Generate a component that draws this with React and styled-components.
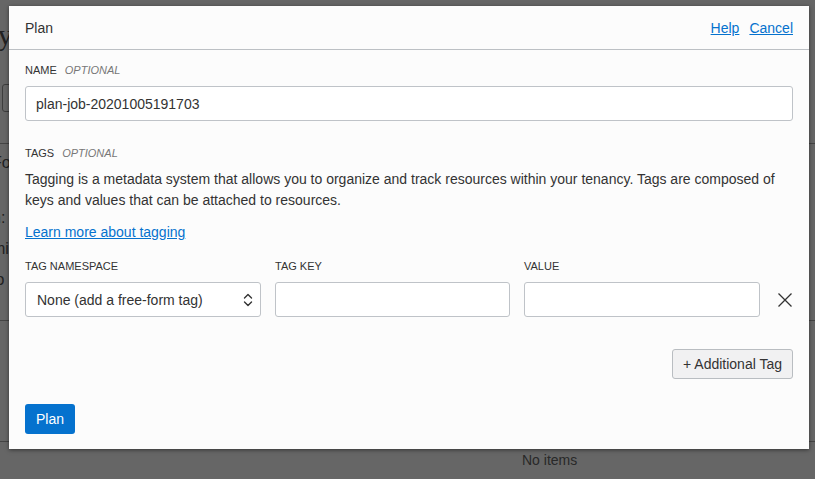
import React from 'react';
import styled, { createGlobalStyle } from 'styled-components';

const GlobalStyle = createGlobalStyle`
  html, body {
    margin: 0;
    padding: 0;
    height: 100%;
    overflow: hidden;
    background: #ffffff;
    font-family: "Liberation Sans", Arial, sans-serif;
  }
  #root {
    height: 100%;
  }
`;

const Page = styled.div`
  position: relative;
  height: 479px;
  background: #ffffff;
  color: #555;
  font-family: "Liberation Serif", serif;
`;

const PageTitle = styled.h1`
  margin: 0;
  padding: 18px 0 0 0;
  font-size: 30px;
  font-weight: 400;
  color: #555;
  white-space: nowrap;
  transform: translateX(-104px);
`;

const PageToolbar = styled.div`
  margin: 32px 0 0 2px;
  width: 60px;
  height: 26px;
  border: 1px solid #999;
  border-radius: 3px;
`;

const PageRule = styled.div`
  margin-top: ${(p) => p.$gap}px;
  border-top: 1px solid #aaa;
`;

const PageLine = styled.div`
  margin-top: ${(p) => p.$gap}px;
  font-size: 16px;
  line-height: 18px;
  transform: translateX(-8px);
  font-family: "Liberation Sans", Arial, sans-serif;
`;

const EmptyState = styled.div`
  position: absolute;
  left: 522px;
  top: 452px;
  font-size: 14px;
  font-family: "Liberation Sans", Arial, sans-serif;
  color: #666;
`;

const Backdrop = styled.div`
  position: absolute;
  inset: 0;
  background: rgba(0, 0, 0, 0.6);
`;

const Dialog = styled.div`
  position: absolute;
  left: 9px;
  top: 6px;
  width: 800px;
  height: 443px;
  background: #fcfcfc;
  box-shadow: 0 1px 4px rgba(0, 0, 0, 0.5);
  display: flex;
  flex-direction: column;
  font-family: "Liberation Sans", Arial, sans-serif;
  color: #333;
`;

const Header = styled.div`
  height: 44px;
  box-sizing: border-box;
  border-bottom: 1px solid #bcc0c4;
  display: flex;
  align-items: center;
  justify-content: space-between;
  padding: 0 16px;
  font-size: 14px;
`;

const Title = styled.div`
  color: #333;
`;

const HeaderLinks = styled.div`
  display: flex;
  gap: 10px;
  padding-top: 1px;
`;

const Link = styled.a`
  color: #0572ce;
  text-decoration: underline;
  font-size: 14px;
  cursor: pointer;
`;

const Body = styled.div`
  padding: 14px 16px 0 16px;
  display: flex;
  flex-direction: column;
`;

const Label = styled.div`
  font-size: 11px;
  text-transform: uppercase;
  color: #333;
  line-height: 13px;
  margin-bottom: ${(p) => p.$mb ?? 9}px;
`;

const Optional = styled.span`
  font-style: italic;
  color: #777;
  margin-left: 8px;
`;

const TextInput = styled.div`
  box-sizing: border-box;
  height: 35px;
  background: #fff;
  border: 1px solid #bfc3c8;
  border-radius: 3px;
  padding: 0 10px;
  display: flex;
  align-items: center;
  font-size: 14px;
  color: #333;
`;

const Section = styled.div`
  margin-top: ${(p) => p.$mt}px;
`;

const Paragraph = styled.p`
  margin: 0;
  font-size: 14px;
  line-height: 21px;
  color: #333;
`;

const LinkLine = styled(Paragraph)`
  margin-top: 11px;
`;

const TagRow = styled.div`
  display: grid;
  grid-template-columns: 236px 235px 236px 22px;
  column-gap: 14px;
  align-items: end;
`;

const Field = styled.div`
  display: flex;
  flex-direction: column;
`;

const SelectBox = styled(TextInput)`
  justify-content: space-between;
  padding: 0 7px 0 11px;
`;

const RemoveButton = styled.button`
  height: 35px;
  border: none;
  background: none;
  padding: 0;
  display: flex;
  align-items: center;
  justify-content: center;
  color: #333;
  cursor: pointer;
`;

const ActionRow = styled.div`
  display: flex;
  justify-content: flex-end;
  margin-top: 32px;
`;

const SecondaryButton = styled.button`
  height: 30px;
  box-sizing: border-box;
  padding: 0 10px;
  font-family: inherit;
  font-size: 14px;
  color: #333;
  background: #f1f1f2;
  border: 1px solid #b9bdc1;
  border-radius: 3px;
`;

const Footer = styled.div`
  padding: 25px 16px 0 16px;
`;

const PrimaryButton = styled.button`
  height: 30px;
  padding: 0 11px;
  font-family: inherit;
  font-size: 14px;
  color: #fff;
  background: #0572ce;
  border: none;
  border-radius: 3px;
`;

function Chevrons() {
  return (
    <svg width="10" height="14" viewBox="0 0 10 14" fill="none" stroke="#333" strokeWidth="1.4" strokeLinecap="round" strokeLinejoin="round">
      <path d="M1.5 5 L5 1.5 L8.5 5" />
      <path d="M1.5 9 L5 12.5 L8.5 9" />
    </svg>
  );
}

function CloseIcon() {
  return (
    <svg width="16" height="16" viewBox="0 0 16 16" fill="none" stroke="#333" strokeWidth="1.3">
      <path d="M1.5 1.5 L14.5 14.5 M14.5 1.5 L1.5 14.5" />
    </svg>
  );
}

export default function App() {
  return (
    <>
      <GlobalStyle />
      <Page>
        <PageTitle>Company</PageTitle>
        <PageToolbar />
        <PageRule $gap={31} />
        <PageLine $gap={10}>Form</PageLine>
        <PageLine $gap={37}>n:</PageLine>
        <PageLine $gap={13}>mi</PageLine>
        <PageLine $gap={13}>lo</PageLine>
        <PageRule $gap={31} />
        <PageRule $gap={120} />
        <EmptyState>No items</EmptyState>
        <Backdrop />
        <Dialog>
          <Header>
            <Title>Plan</Title>
            <HeaderLinks>
              <Link>Help</Link>
              <Link>Cancel</Link>
            </HeaderLinks>
          </Header>
          <Body>
            <Label>
              Name<Optional>Optional</Optional>
            </Label>
            <TextInput>plan-job-20201005191703</TextInput>
            <Section $mt={26}>
              <Label>
                Tags<Optional>Optional</Optional>
              </Label>
              <Paragraph>
                Tagging is a metadata system that allows you to organize and track resources within your tenancy. Tags are composed of keys and values that can be attached to resources.
              </Paragraph>
              <LinkLine>
                <Link>Learn more about tagging</Link>
              </LinkLine>
            </Section>
            <Section $mt={17}>
              <TagRow>
                <Field>
                  <Label>Tag Namespace</Label>
                  <SelectBox>
                    None (add a free-form tag)
                    <Chevrons />
                  </SelectBox>
                </Field>
                <Field>
                  <Label>Tag Key</Label>
                  <TextInput />
                </Field>
                <Field>
                  <Label>Value</Label>
                  <TextInput />
                </Field>
                <RemoveButton aria-label="Remove tag">
                  <CloseIcon />
                </RemoveButton>
              </TagRow>
            </Section>
            <ActionRow>
              <SecondaryButton>+ Additional Tag</SecondaryButton>
            </ActionRow>
          </Body>
          <Footer>
            <PrimaryButton>Plan</PrimaryButton>
          </Footer>
        </Dialog>
      </Page>
    </>
  );
}
